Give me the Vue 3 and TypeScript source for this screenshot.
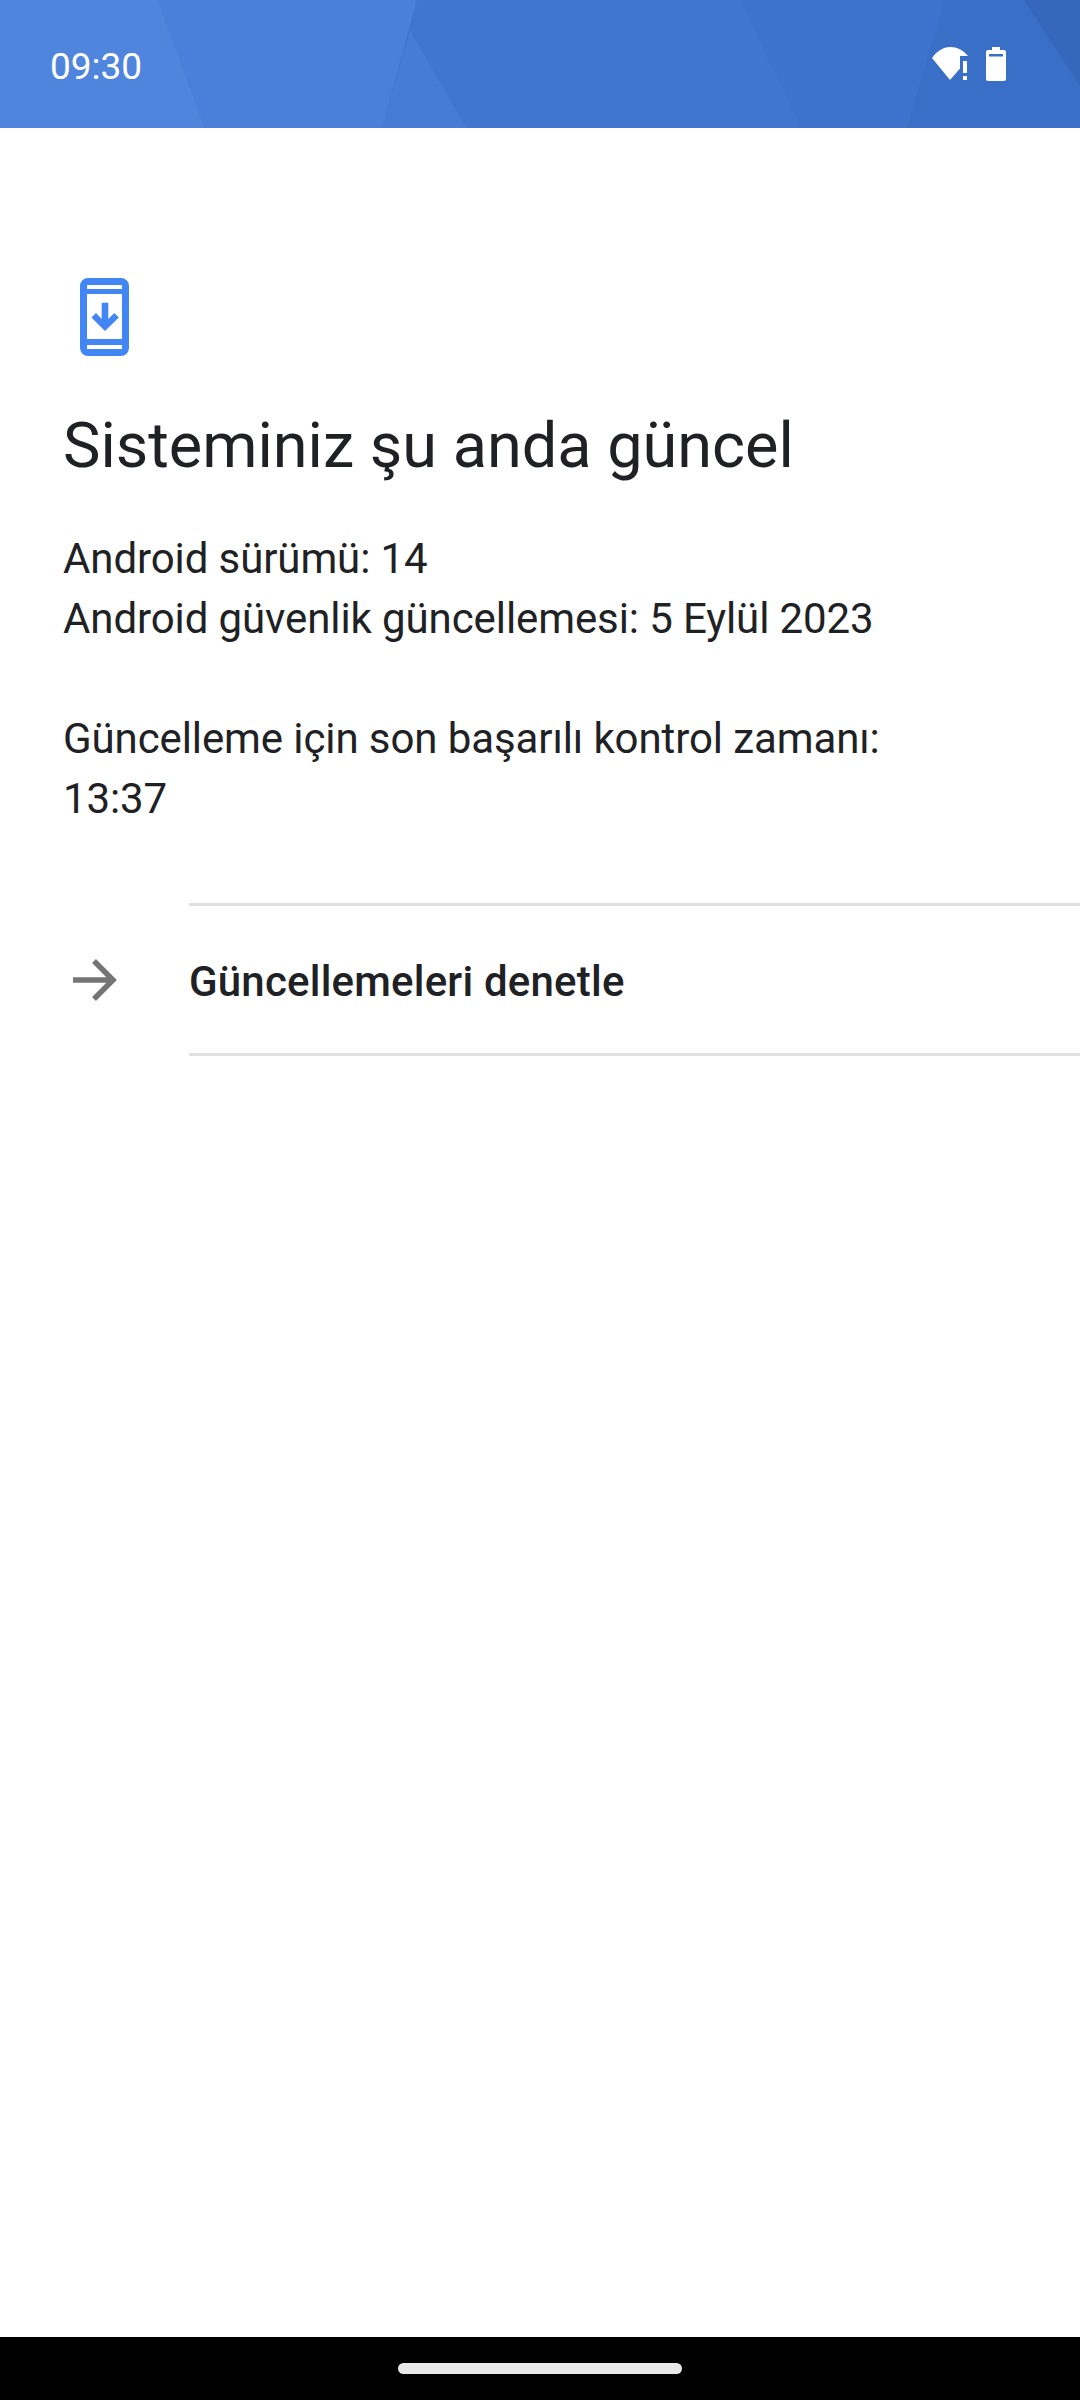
<script setup lang="ts">
const lines: string[] = ['Android sürümü: 14', 'Android güvenlik güncellemesi: 5 Eylül 2023']
</script>

<template>
  <div class="screen">
    <header class="status">
      <svg class="facets" viewBox="0 0 1080 128" preserveAspectRatio="none" aria-hidden="true">
        <rect width="1080" height="128" fill="#3d72cb" />
        <polygon points="0,0 158,0 205,128 0,128" fill="#5085dd" />
        <polygon points="158,0 417,0 382,128 205,128" fill="#4a80d9" />
        <polygon points="410,30 467,128 382,128" fill="#467cd5" />
        <polygon points="417,0 740,0 802,128 467,128 410,30" fill="#4076cf" />
        <polygon points="740,0 945,0 907,128 802,128" fill="#3d73cc" />
        <polygon points="945,0 1024,0 1080,86 1080,128 907,128" fill="#3a6fc7" />
        <polygon points="1024,0 1080,0 1080,86" fill="#3567bd" />
      </svg>
      <span class="clock">09:30</span>
      <div class="status-icons">
        <svg class="wifi" width="40" height="36" viewBox="0 0 40 36" aria-hidden="true">
          <path fill="#fff" d="M0 12C5 5 11 1 18 1c7 0 13 3 18 9h-8v12.500L18 34z" />
          <rect x="31" y="15" width="4" height="12" fill="#fff" />
          <rect x="31" y="30" width="4" height="4" fill="#fff" />
        </svg>
        <svg class="battery" width="20" height="34" viewBox="0 0 20 34" aria-hidden="true">
          <path
            fill="#fff"
            fill-rule="evenodd"
            d="M6 0h8v3h4a2 2 0 0 1 2 2v27a2 2 0 0 1-2 2H2a2 2 0 0 1-2-2V5a2 2 0 0 1 2-2h4zM3 7v2.500h14V7z"
          />
        </svg>
      </div>
    </header>

    <main class="content">
      <svg class="phone" width="49" height="78" viewBox="0 0 49 78" aria-hidden="true">
        <path
          fill="#4285f4"
          fill-rule="evenodd"
          d="M8 0h33a8 8 0 0 1 8 8v62a8 8 0 0 1-8 8H8a8 8 0 0 1-8-8V8a8 8 0 0 1 8-8zM7 7v4h35V7zm0 9v45h35V16zM7 67v4h35v-4z"
        />
        <path fill="#4285f4" d="M21.700 24.700h6.600V41l6-6 4.500 4.500L25 53 11.500 39.500 16 35l5.700 6z" />
      </svg>

      <h1 class="title">Sisteminiz şu anda güncel</h1>

      <div class="info">
        <p v-for="line in lines" :key="line">{{ line }}</p>
        <p class="gap">Güncelleme için son başarılı kontrol zamanı:</p>
        <p>13:37</p>
      </div>

      <div class="action">
        <svg class="arrow" width="44" height="42" viewBox="0 0 44 42" aria-hidden="true">
          <path d="M0 21h39M21 2l19 19-19 19" fill="none" stroke="#757575" stroke-width="5.500" />
        </svg>
        <span class="action-label">Güncellemeleri denetle</span>
      </div>
    </main>

    <footer class="nav">
      <span class="pill"></span>
    </footer>
  </div>
</template>

<style>
html,
body {
  margin: 0;
  background: #fff;
}
</style>

<style scoped>
.screen {
  width: 1080px;
  height: 2400px;
  display: flex;
  flex-direction: column;
  background: #fff;
  font-family: Roboto, "Liberation Sans", sans-serif;
  color: #202124;
  overflow: hidden;
}

.status {
  position: relative;
  flex: none;
  height: 128px;
  display: flex;
  align-items: center;
  justify-content: space-between;
  padding: 0 74px 0 50px;
  box-sizing: border-box;
  color: #fff;
}

.facets {
  position: absolute;
  inset: 0;
  width: 100%;
  height: 100%;
}

.clock {
  position: relative;
  top: 2px;
  font-size: 37px;
  line-height: 1;
}

.status-icons {
  position: relative;
  display: flex;
  align-items: center;
  gap: 14px;
}

.status-icons svg {
  display: block;
}

.content {
  flex: 1;
  display: flex;
  flex-direction: column;
  padding-top: 150px;
}

.phone {
  display: block;
  margin-left: 80px;
}

.title {
  margin: 54px 0 0 63px;
  font-size: 63px;
  font-weight: 400;
  line-height: 72px;
}

.info {
  margin: 47px 0 0 63px;
  font-size: 42px;
  line-height: 60px;
  letter-spacing: -0.1px;
}

.info p {
  margin: 0;
}

.info .gap {
  margin-top: 60px;
}

.action {
  position: relative;
  margin: 74px 0 0 189px;
  height: 144px;
  padding-top: 3px;
  box-sizing: content-box;
  display: flex;
  align-items: center;
  border-top: 3px solid #e0e0e0;
  border-bottom: 3px solid #e0e0e0;
}

.arrow {
  position: absolute;
  left: -116px;
  top: 53px;
}

.action-label {
  font-size: 42px;
  font-weight: 500;
  letter-spacing: 0.2px;
}

.nav {
  flex: none;
  height: 63px;
  background: #000;
  display: flex;
  justify-content: center;
  padding-top: 26px;
  box-sizing: border-box;
}

.pill {
  width: 284px;
  height: 11px;
  border-radius: 6px;
  background: #e8e8e8;
}
</style>
